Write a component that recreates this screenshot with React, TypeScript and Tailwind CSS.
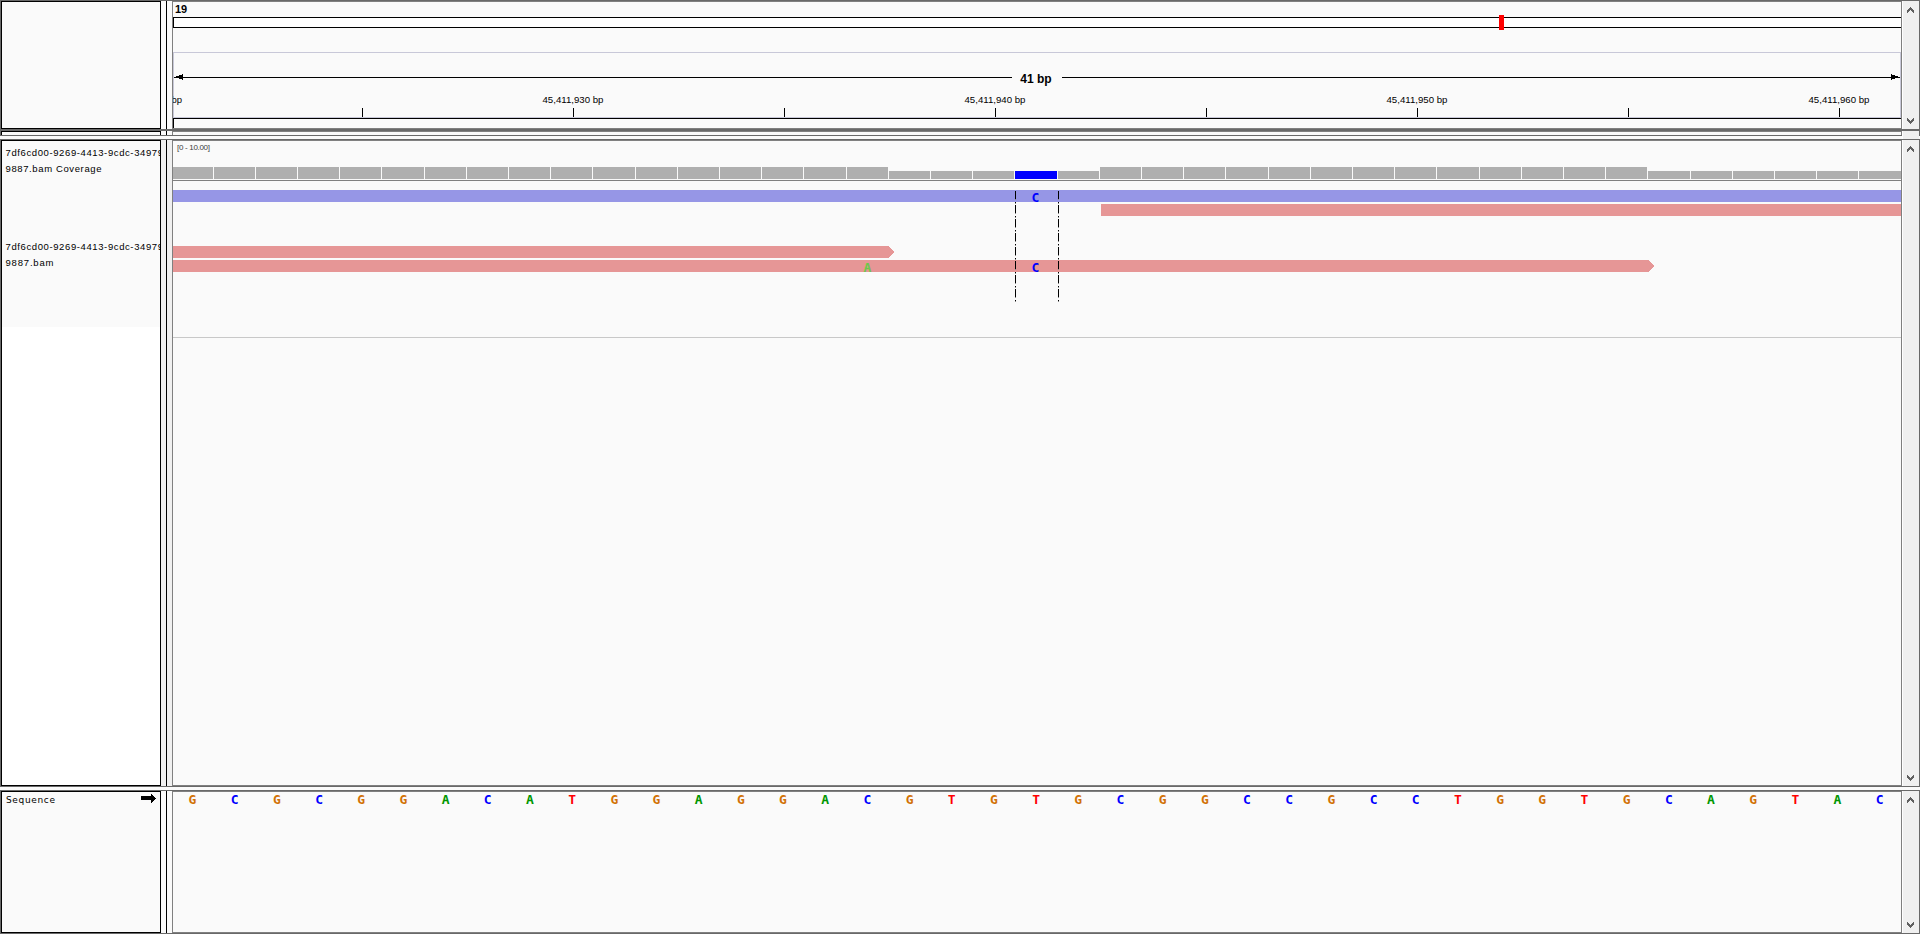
import React from "react";

function Chevron({ up }: { up?: boolean }) {
  return (
    <svg width="7" height="6" viewBox="0 0 7 6" shapeRendering="crispEdges" className={up ? "" : "rotate-180"}>
      <path fill="#606060" d="M3 0h1v1h1v1h1v1h1v3h-1v-1h-1v-1h-1v-1h-1v1h-1v1h-1v1h-1v-3h1v-1h1v-1h1z" />
    </svg>
  );
}

function Scrollbar({ arrows = true }: { arrows?: boolean }) {
  return (
    <div className="flex w-[17px] shrink-0 flex-col items-start justify-between border-l border-white bg-[#f0f0f0] pt-1.5 pb-[5px] pl-1">
      {arrows && <Chevron up />}
      {arrows && <Chevron />}
    </div>
  );
}

function Panel({
  className,
  left,
  leftClass = "bg-[#fafafa]",
  viewClass = "border",
  gutter,
  arrows = true,
  children,
}: {
  className: string;
  left?: React.ReactNode;
  leftClass?: string;
  viewClass?: string;
  gutter: string;
  arrows?: boolean;
  children?: React.ReactNode;
}) {
  return (
    <section className={`flex shrink-0 border border-[#696969] ${className}`}>
      <div className={`w-[160px] shrink-0 overflow-hidden border border-black ${leftClass}`}>{left}</div>
      <div className={`w-[5px] shrink-0 ${gutter}`} />
      <div className="w-px shrink-0 bg-black" />
      <div className={`w-[5px] shrink-0 ${gutter}`} />
      <div className={`w-[1730px] shrink-0 overflow-hidden border-[#808080] bg-[#fafafa] ${viewClass}`}>{children}</div>
      <Scrollbar arrows={arrows} />
    </section>
  );
}

function Ruler() {
  const ticks = Array.from({ length: 8 }, (_, i) => 189 + i * 211);
  const labels = [
    { x: 400, t: "45,411,930 bp" },
    { x: 822, t: "45,411,940 bp" },
    { x: 1244, t: "45,411,950 bp" },
    { x: 1666, t: "45,411,960 bp" },
  ];
  return (
    <svg width="1728" height="66" className="block" shapeRendering="crispEdges">
      <path d="M0.5 66V0.5H1727.5V66" fill="none" stroke="#c8c8d8" />
      <path d="M0 65.5H1728" stroke="#c8c8d8" />
      <path d="M1 25.5H839M889 25.5H1727" stroke="#000" />
      <path d="M3 25V24h3v-1h3v-1h1v6h-1v-1h-3v-1h-3zM1725 25V24h-3v-1h-3v-1h-1v6h1v-1h3v-1h3z" />
      <text x="863" y="31" textAnchor="middle" className="font-['Liberation_Sans'] text-[12px] font-bold">41 bp</text>
      <g className="font-['Liberation_Sans'] text-[9.5px]">
        <text x="9" y="51" textAnchor="end">bp</text>
        {labels.map((l) => (
          <text key={l.x} x={l.x} y="51" textAnchor="middle" textLength="61" lengthAdjust="spacingAndGlyphs">{l.t}</text>
        ))}
      </g>
      {ticks.map((x) => (
        <rect key={x} x={x} y="56" width="1" height="9" />
      ))}
    </svg>
  );
}

function Alignments() {
  const edge = (i: number) => (i === 0 ? -1 : Math.round(39.6 + (i - 1) * 42.2));
  return (
    <svg width="1728" height="200" className="block" shapeRendering="crispEdges">
      <text x="4" y="9" textLength="33" className="fill-[#404040] font-['Liberation_Sans'] text-[8px]">[0 - 10.00]</text>
      {Array.from({ length: 41 }, (_, i) => {
        const low = (i >= 17 && i <= 21) || i >= 35;
        const x = edge(i) + 1;
        return (
          <rect
            key={i}
            x={x}
            y={low ? 30 : 26}
            width={edge(i + 1) - x}
            height={low ? 8 : 12}
            fill={i === 20 ? "#0000ff" : "#afafaf"}
          />
        );
      })}
      <path d="M0 39.5H1728" stroke="#808080" />
      <rect y="49" width="1728" height="12" fill="#9696e6" />
      <rect x="928" y="63" width="800" height="12" fill="#e69696" />
      <path d="M0 105H716L721 111L716 117H0Z" fill="#e69696" />
      <path d="M0 119H1476L1481 125L1476 131H0Z" fill="#e69696" />
      <g className="font-['DejaVu_Sans_Mono'] text-[13px] font-bold" textAnchor="middle">
        <text x="862.5" y="61" fill="#0000ff">C</text>
        <text x="694.5" y="131" fill="#6cc84b">A</text>
        <text x="862.5" y="131" fill="#0000ff">C</text>
      </g>
      <path d="M842.5 49V161M885.5 49V161" stroke="#000" strokeDasharray="8 3 1 2" strokeDashoffset="13" />
      <path d="M842.5 49V161M885.5 49V161" stroke="#888" strokeDasharray="1 3 1 9" strokeDashoffset="5" />
    </svg>
  );
}

const BASES = "GCGCGGACATGGAGGACGTGTGCGGCCGCCTGGTGCAGTAC".split("");
const BASE_FILL: Record<string, string> = { G: "#d17105", C: "#0000ff", A: "#009600", T: "#ff0000" };

function TrackName({ first, second }: { first: string; second: string }) {
  return (
    <svg width="158" height="34" className="block font-['Liberation_Sans'] text-[9.5px]">
      <text x="3.5" y="13" textLength="157.5">{first}</text>
      <text x="3.5" y="29" textLength={second.length > 10 ? 96 : 48}>{second}</text>
    </svg>
  );
}

export default function App() {
  return (
    <main className="flex h-[934px] w-[1920px] flex-col overflow-hidden bg-[#fafafa] text-black">
      <Panel className="h-[130px]" gutter="bg-[#fafafa]">
        <svg width="1728" height="50" className="block" shapeRendering="crispEdges">
          <text x="2" y="11" textLength="12" className="font-['Liberation_Sans'] text-[11px] font-bold">19</text>
          <rect x="0.5" y="15.5" width="1730" height="10" fill="#fff" stroke="#000" />
          <rect x="1326" y="13" width="5" height="15" fill="#ff0000" />
        </svg>
        <Ruler />
        <div className="h-3 border-t border-l border-black" />
      </Panel>

      <Panel
        className="h-[6px]"
        gutter="bg-[#fafafa]"
        leftClass="border-b-0 bg-[#fafafa]"
        viewClass="border border-b-0"
        arrows={false}
      />
      <div className="h-[3px] shrink-0" />

      <Panel
        className="h-[648px]"
        gutter="bg-[#f0f0f0]"
        leftClass="bg-white"
        left={
          <div className="h-[186px] bg-[#fafafa] pt-[2px]">
            <TrackName first="7df6cd00-9269-4413-9cdc-34979" second="9887.bam Coverage" />
            <div className="h-[60px]" />
            <TrackName first="7df6cd00-9269-4413-9cdc-34979" second="9887.bam" />
          </div>
        }
      >
        <div className="h-[197px] overflow-hidden border-b border-[#c8c8c8]">
          <Alignments />
        </div>
      </Panel>
      <div className="h-[3px] shrink-0" />

      <Panel
        className="h-[144px]"
        gutter="bg-[#fafafa]"
        left={
          <div className="flex justify-between">
            <svg width="80" height="18" className="font-['DejaVu_Sans'] text-[9px]">
              <text x="4" y="11" textLength="49">Sequence</text>
            </svg>
            <svg width="20" height="16" shapeRendering="crispEdges">
              <path d="M1 4H11V2h1v1h1v1h1v1h1v1h1v1h-1v1h-1v1h-1v1h-1v1h-1V8H1z" />
            </svg>
          </div>
        }
      >
        <svg width="1728" height="20" className="block font-['DejaVu_Sans_Mono'] text-[13px] font-bold" textAnchor="middle">
          {BASES.map((b, i) => (
            <text key={i} x={19.5 + i * 42.18} y="12" fill={BASE_FILL[b]}>{b}</text>
          ))}
        </svg>
      </Panel>
    </main>
  );
}
